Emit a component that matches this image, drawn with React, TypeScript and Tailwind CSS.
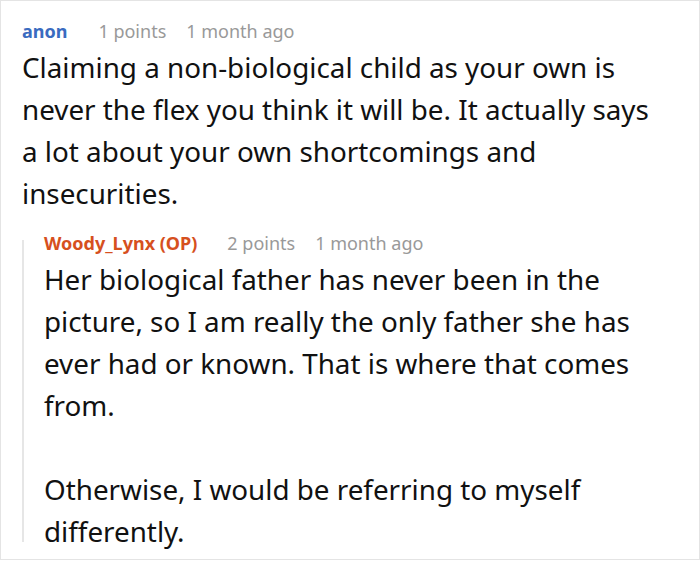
import React from "react";

const font = { fontFamily: '"Noto Sans", "Open Sans", sans-serif' };

function Header({ name, color, points, gap }: { name: string; color: string; points: string; gap: string }) {
  return (
    <div className="flex items-center h-[30px] text-[18px] leading-[30px]">
      <span className={`font-bold ${color}`}>{name}</span>
      <span className={`${gap} text-[#999999]`}>{points}</span>
      <span className="ml-[20px] text-[#999999]">1 month ago</span>
    </div>
  );
}

export default function App() {
  return (
    <div className="w-[700px] h-[560px] overflow-hidden bg-white border border-[#e4e4e4] text-[#111111]" style={font}>
      <div className="pl-[21px] pt-[15px] pr-[34px]">
        <Header name="anon" color="text-[#3a6bc0]" points="1 points" gap="ml-[31px]" />
        <p className="text-[27.8px] leading-[42px]">
          Claiming a non-biological child as your own is never the flex you think it will be. It actually says a lot about your own shortcomings and insecurities.
        </p>
        <div className="mt-[14px] flex">
          <div className="w-[2px] shrink-0 bg-[#e6e6e6] mt-[12px] mb-[10px]" />
          <div className="pl-[20px] flex-1">
            <Header name="Woody_Lynx (OP)" color="text-[#d6501e]" points="2 points" gap="ml-[30px]" />
            <div className="text-[27.8px] leading-[42px]">
              <p>Her biological father has never been in the picture, so I am really the only father she has ever had or known. That is where that comes from.</p>
              <p className="mt-[42px]">Otherwise, I would be referring to myself differently.</p>
            </div>
          </div>
        </div>
      </div>
    </div>
  );
}
